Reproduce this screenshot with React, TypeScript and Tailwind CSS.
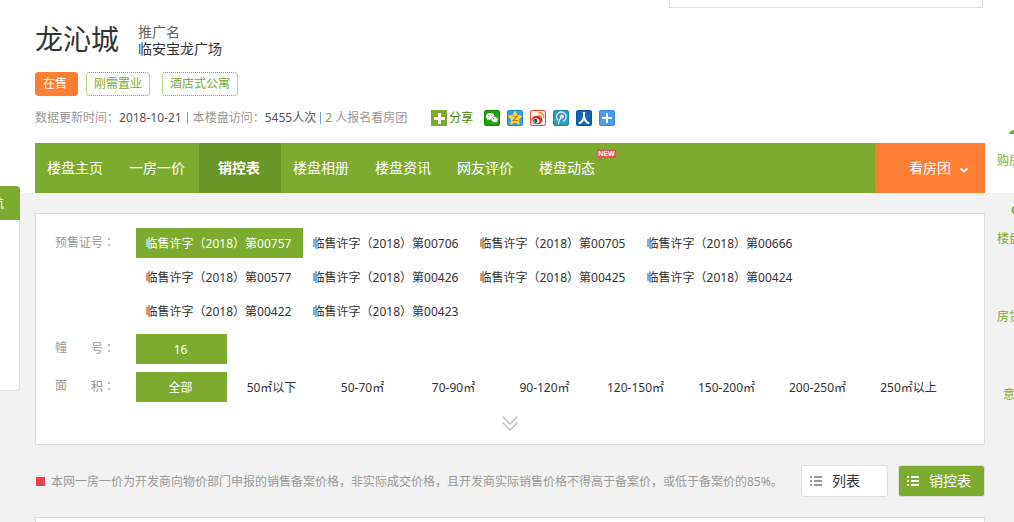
import React, { useState } from "react";

const permits = [
  "00757",
  "00706",
  "00705",
  "00666",
  "00577",
  "00426",
  "00425",
  "00424",
  "00422",
  "00423",
];

const areas = [
  "全部",
  "50㎡以下",
  "50-70㎡",
  "70-90㎡",
  "90-120㎡",
  "120-150㎡",
  "150-200㎡",
  "200-250㎡",
  "250㎡以上",
];

const navItems = [
  { name: "楼盘主页" },
  { name: "一房一价" },
  { name: "销控表", active: true },
  { name: "楼盘相册" },
  { name: "楼盘资讯" },
  { name: "网友评价" },
  { name: "楼盘动态", isNew: true },
];

const WechatIcon = () => (
  <svg width="16" height="16" viewBox="0 0 16 16">
    <rect x="0.5" y="0.5" width="15" height="15" rx="1.5" fill="#1fa30d" stroke="#148508" />
    <path d="M6.3 3C3.9 3 2 4.500 2 6.400c0 1.100.6 2 1.600 2.600L3.200 10.300l1.600-.8c.5.1 1 .2 1.500.2 2.400 0 4.200-1.500 4.200-3.300S8.700 3 6.300 3z" fill="#fff" />
    <path d="M10.600 6.700c-2 0-3.500 1.200-3.500 2.800s1.500 2.800 3.500 2.800c.4 0 .8 0 1.200-.2l1.400.8-.4-1.200c.8-.5 1.400-1.300 1.400-2.200 0-1.600-1.600-2.800-3.600-2.800z" fill="#fff" stroke="#1fa30d" strokeWidth="0.6" />
    <circle cx="5" cy="5.500" r="0.6" fill="#1fa30d" />
    <circle cx="7.800" cy="5.500" r="0.6" fill="#1fa30d" />
    <circle cx="9.500" cy="8.800" r="0.500" fill="#1fa30d" />
    <circle cx="12" cy="8.800" r="0.500" fill="#1fa30d" />
  </svg>
);

const QzoneIcon = () => (
  <svg width="16" height="16" viewBox="0 0 16 16">
    <rect x="0.5" y="0.5" width="15" height="15" rx="1.5" fill="#36a0e4" stroke="#2484c8" />
    <path d="M8 1l2.100 4.500 4.900.6-3.600 3.400 1 5L8 12.100 3.600 14.500l1-5L1 6.100l4.900-.6z" fill="#ffd83b" stroke="#ffd83b" strokeWidth="0.800" />
    <path d="M5.500 6.200h4.700L6 10.500h5" fill="none" stroke="#c77c10" strokeWidth="1.100" />
  </svg>
);

const WeiboIcon = () => (
  <svg width="16" height="16" viewBox="0 0 16 16">
    <rect x="0.5" y="0.5" width="15" height="15" rx="1.5" fill="#fff3ea" stroke="#e6502a" />
    <ellipse cx="7" cy="10" rx="5.500" ry="4.200" fill="#e02a20" />
    <ellipse cx="5.800" cy="10.800" rx="3.600" ry="2.600" fill="#fff" />
    <circle cx="5.300" cy="11" r="2.100" fill="#1d1d1d" />
    <circle cx="4.800" cy="11.200" r="0.700" fill="#fff" />
    <path d="M9 5.300c1.500-.5 2.800.6 2.400 2.200" fill="none" stroke="#f08a24" strokeWidth="1.300" />
    <path d="M8.500 2.800c3.200-.8 6 1.600 5.200 5" fill="none" stroke="#f08a24" strokeWidth="1.400" />
  </svg>
);

const TencentWeiboIcon = () => (
  <svg width="16" height="16" viewBox="0 0 16 16">
    <rect x="0.5" y="0.5" width="15" height="15" rx="1.5" fill="#2f9bc4" stroke="#2383a9" />
    <path d="M5 10.300A4.800 4.800 0 1 1 10 11.300" fill="none" stroke="#d5f0fb" strokeWidth="1.400" />
    <circle cx="8.800" cy="6.500" r="1.900" fill="#fff" />
    <path d="M8.300 7.200C6.500 9 5.700 11 5.500 14" fill="none" stroke="#fff" strokeWidth="1.300" />
  </svg>
);

const RenrenIcon = () => (
  <svg width="16" height="16" viewBox="0 0 16 16">
    <rect x="0.5" y="0.5" width="15" height="15" rx="1.5" fill="#1266b8" stroke="#0d4f97" />
    <path d="M8 2v4.500C7.800 9.500 6 12 3 13.500M8 6.500c.3 3 2 5.500 5 7" fill="none" stroke="#fff" strokeWidth="2.200" />
  </svg>
);

const MoreIcon = () => (
  <svg width="16" height="16" viewBox="0 0 16 16">
    <rect x="0.5" y="0.5" width="15" height="15" rx="1.5" fill="#4f9bf0" stroke="#3d85d6" />
    <path d="M8 3v10M3 8h10" stroke="#fff" strokeWidth="2" />
  </svg>
);

const shareIcons = [
  { label: "微信", Icon: WechatIcon },
  { label: "QQ空间", Icon: QzoneIcon },
  { label: "新浪微博", Icon: WeiboIcon },
  { label: "腾讯微博", Icon: TencentWeiboIcon },
  { label: "人人网", Icon: RenrenIcon },
  { label: "更多", Icon: MoreIcon },
];

const ListIcon = () => (
  <svg width="12" height="12" viewBox="0 0 12 12" fill="currentColor">
    <path d="M0 1h2v2H0zM4 1h8v2H4zM0 5h2v2H0zM4 5h8v2H4zM0 9h2v2H0zM4 9h8v2H4z" />
  </svg>
);

// the TC face centres the full-width colon
const Colon = () => <span className="font-['Noto_Sans_CJK_TC',sans-serif]">：</span>;

interface OptionProps {
  text: string;
  selected: boolean;
  wide?: boolean;
  onClick: () => void;
}

const Option: React.FC<OptionProps> = ({ text, selected, wide, onClick }) => (
  <button
    type="button"
    onClick={onClick}
    className={`h-[30px] pt-0.5 pr-0.5 text-center whitespace-nowrap ${wide ? "w-[167px]" : "w-[91px]"} ${
      selected ? "bg-[#7dab2f] text-white" : "text-[#333]"
    }`}
  >
    {text}
  </button>
);

const App: React.FC = () => {
  const [permit, setPermit] = useState(permits[0]);
  const [building, setBuilding] = useState("16");
  const [area, setArea] = useState(areas[0]);
  const [view, setView] = useState("table");

  return (
    <div className="relative flex min-h-screen flex-col overflow-hidden bg-[#f2f2f2] font-['Noto_Sans','Noto_Sans_CJK_SC',sans-serif] text-xs text-[#333]">
      <header className="bg-white pr-[29px] pl-[35px]">
        <div className="mr-0.5 ml-auto h-2 w-[314px] border-x border-b border-[#ddd]" />

        <div className="flex gap-[19px] pt-[15px]">
          <h1 className="text-[28px] leading-8">龙沁城</h1>
          <div className="text-sm leading-[17px]">
            <p className="text-[#666]">推广名</p>
            <p>临安宝龙广场</p>
          </div>
        </div>

        <div className="flex pt-[15px] leading-[22px]">
          <span className="mr-2 rounded-[3px] border border-[#ff7e36] bg-[#ff7e36] pr-2.5 pl-[7px] text-white">在售</span>
          <span className="mr-3 rounded-[3px] border border-dotted border-[#7dab2f] px-[7px] text-[#7dab2f]">刚需置业</span>
          <span className="rounded-[3px] border border-dotted border-[#7dab2f] px-[7px] text-[#7dab2f]">酒店式公寓</span>
        </div>

        <div className="flex items-center pt-3 pb-[15px] leading-5 text-[#999]">
          <span>数据更新时间：</span>
          <span className="text-[#555]">2018-10-21</span>
          <span className="mx-[5px] h-3 w-px bg-[#7aa0d8]" />
          <span>本楼盘访问：</span>
          <span className="text-[#555]">5455人次</span>
          <span className="mx-1 h-3 w-px bg-[#7aa0d8]" />
          <span>
            <span className="text-[#7dab2f]">2</span> 人报名看房团
          </span>
          <a href="#share" className="ml-6 flex items-center gap-0.5 text-[#4c8a0c]">
            <svg width="16" height="16" viewBox="0 0 16 16">
              <path d="M0 0h16v16H0z" fill="#7dab2f" />
              <path d="M7 3h3v4h4v3h-4v4H7v-4H3V7h4z" fill="#fff" />
            </svg>
            分享
          </a>
          <div className="ml-[11px] flex gap-[7px]">
            {shareIcons.map(({ label, Icon }) => (
              <a key={label} href="#share" aria-label={label}>
                <Icon />
              </a>
            ))}
          </div>
        </div>

        <nav className="flex bg-[#7dab2f] text-sm leading-[50px] text-white">
          {navItems.map((item) => (
            <a
              key={item.name}
              href="#nav"
              className={`relative w-[82px] pr-0.5 text-center ${item.active ? "bg-[#6a9527] font-bold" : ""}`}
            >
              {item.name}
              {item.isNew && (
                <span className="absolute top-1.5 -right-[7px] h-[9px] w-[19px] bg-[#e9545b] font-['Liberation_Sans',sans-serif] text-[7px] leading-[9px] font-bold">
                  NEW
                  <svg className="absolute top-full left-0.5" width="4" height="3" viewBox="0 0 4 3">
                    <path d="M0 0h4L0 3z" fill="#e9545b" />
                  </svg>
                </span>
              )}
            </a>
          ))}
          <a href="#group" className="ml-auto flex w-[110px] items-center justify-end gap-2 bg-[#ff7e36] pr-4">
            看房团
            <svg className="mt-1" width="10" height="7" viewBox="0 0 10 7">
              <path d="M1.500 1.500L5 4.500l3.500-3" fill="none" stroke="#fff" strokeWidth="2" />
            </svg>
          </a>
        </nav>
      </header>

      <main className="flex grow flex-col pt-5 pr-[29px] pl-[35px]">
        <section className="flex flex-col gap-2 border border-[#ddd] bg-white px-[19px] pt-[14px] pb-[13px]">
          <div className="flex">
            <span className="w-[81px] shrink-0 leading-7 text-[#999]">
              预售证号
              <Colon />
            </span>
            <div className="flex flex-wrap gap-y-1">
              {permits.map((p) => (
                <Option
                  key={p}
                  wide
                  text={`临售许字（2018）第${p}`}
                  selected={permit === p}
                  onClick={() => setPermit(p)}
                />
              ))}
            </div>
          </div>
          <div className="flex">
            <span className="flex w-[81px] shrink-0 gap-6 leading-7 text-[#999]">
              <span>幢</span>
              <span>
                号
                <Colon />
              </span>
            </span>
            <Option text="16" selected={building === "16"} onClick={() => setBuilding("16")} />
          </div>
          <div className="flex">
            <span className="flex w-[81px] shrink-0 gap-6 leading-7 text-[#999]">
              <span>面</span>
              <span>
                积
                <Colon />
              </span>
            </span>
            <div className="flex flex-wrap">
              {areas.map((a) => (
                <Option key={a} text={a} selected={area === a} onClick={() => setArea(a)} />
              ))}
            </div>
          </div>
          <button type="button" aria-label="展开" className="mt-1.5 self-center">
            <svg width="16" height="15" viewBox="0 0 16 15" fill="none" stroke="#bbb" strokeWidth="1.300">
              <path d="M0.500 0.500L8 8l7.500-7.500M0.500 6.500L8 14l7.500-7.500" />
            </svg>
          </button>
        </section>

        <div className="flex items-center py-5">
          <span className="ml-px size-[9px] bg-[#e64545]" />
          <p className="ml-1.5 pt-0.5 text-[#999]">
            本网一房一价为开发商向物价部门申报的销售备案价格，非实际成交价格，且开发商实际销售价格不得高于备案价，或低于备案价的85%。
          </p>
          <div className="ml-auto flex shrink-0 gap-2.5 text-sm">
            <button
              type="button"
              aria-pressed={view === "list"}
              onClick={() => setView("list")}
              className="flex h-8 w-[87px] items-center gap-2.5 rounded-[3px] border border-[#ddd] bg-white pl-2"
            >
              <span className="text-[#999]">
                <ListIcon />
              </span>
              列表
            </button>
            <button
              type="button"
              aria-pressed={view === "table"}
              onClick={() => setView("table")}
              className="flex h-8 w-[87px] items-center gap-2.5 rounded-[3px] border border-[#ddd] bg-[#7dab2f] pl-2 text-white"
            >
              <ListIcon />
              销控表
            </button>
          </div>
        </div>

        <section className="min-h-[5px] grow border-x border-t border-[#ddd] bg-white" />
      </main>

      {/* floating panel, mostly off the left edge */}
      <aside className="absolute top-[186px] -left-20 w-[100px]">
        <div className="rounded-tr bg-[#7dab2f] pt-0.5 pr-4 text-right leading-8 text-white">航</div>
        <div className="h-[171px] rounded-br border-r border-b border-[#ddd] bg-white" />
      </aside>

      {/* right toolbar */}
      <aside className="absolute top-[113px] -right-[31px] flex w-12 flex-col text-[#7dab2f]">
        <a href="#buy" className="flex h-[78px] flex-col pt-2">
          <svg className="self-center" width="24" height="18" viewBox="0 0 24 18" fill="currentColor">
            <path d="M0 13c0-3 4-4 8-5h8c4 1 8 2 8 5z" />
            <circle cx="12" cy="5" r="5" />
          </svg>
          <span className="mt-3 leading-5">购房</span>
        </a>
        <a href="#estate" className="flex h-[78px] flex-col pt-3">
          <svg className="self-center" width="20" height="18" viewBox="0 0 20 18" fill="none" stroke="currentColor" strokeWidth="2">
            <circle cx="5" cy="7" r="3.500" />
            <path d="M8 7h11" />
          </svg>
          <span className="mt-2 leading-5">楼盘</span>
        </a>
        <a href="#loan" className="flex h-[78px] flex-col justify-end pb-5 leading-5">
          房贷
        </a>
        <a href="#feedback" className="flex h-[78px] flex-col justify-end pb-5 pl-1.5 leading-5">
          意
        </a>
      </aside>
    </div>
  );
};

export default App;
